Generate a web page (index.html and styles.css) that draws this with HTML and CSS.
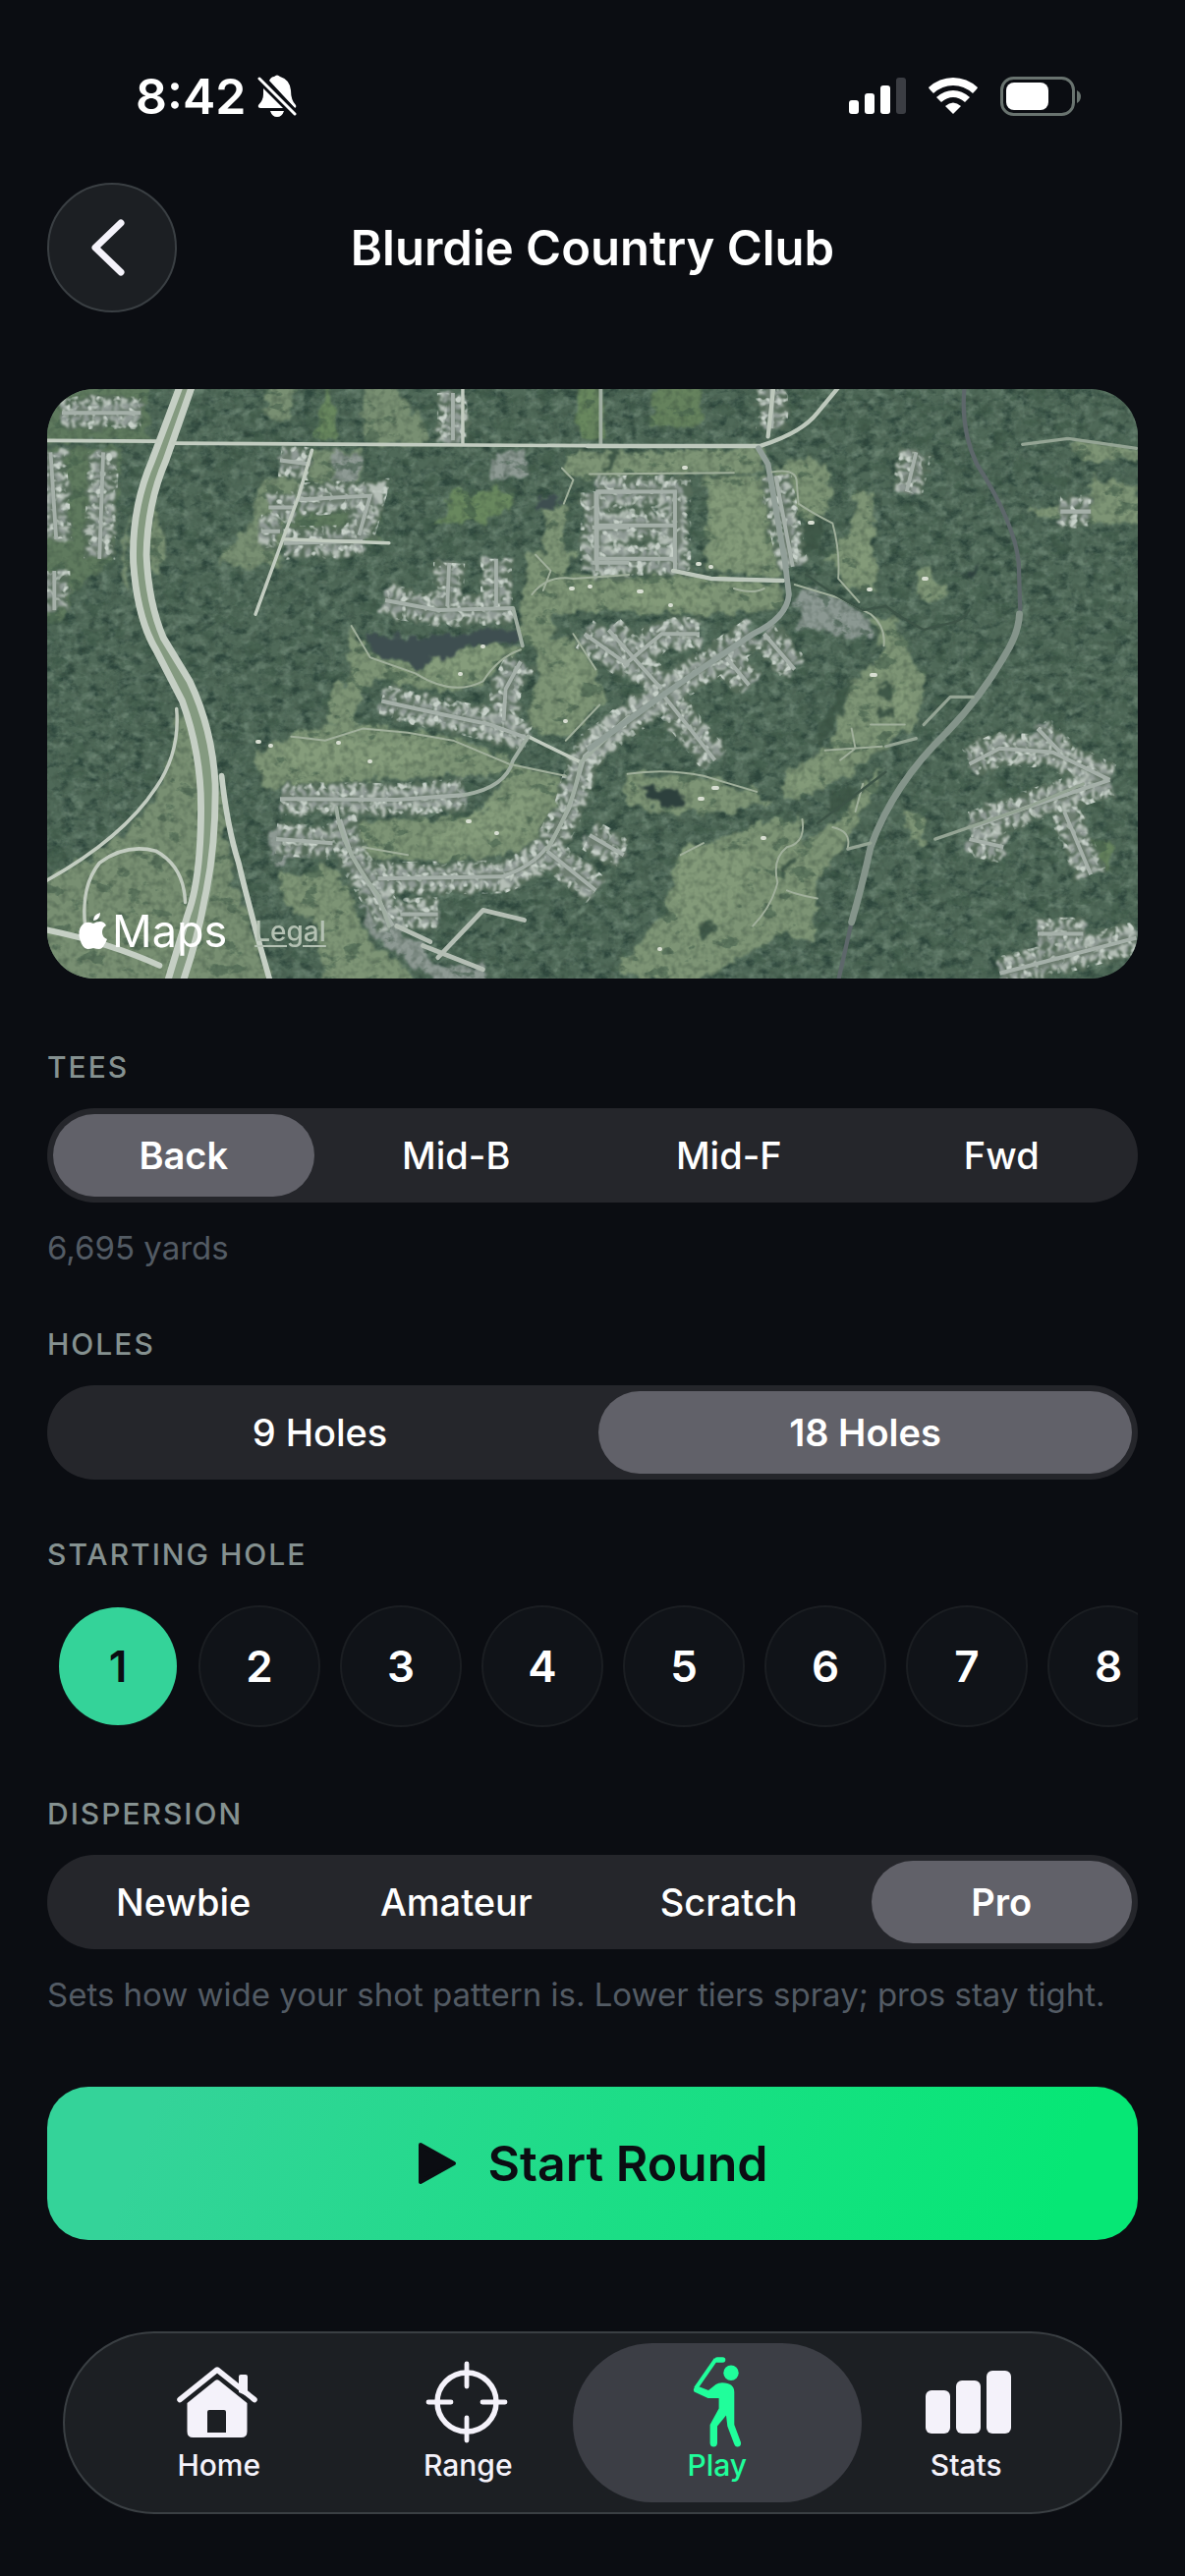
FILE: index.html
```html
<!DOCTYPE html>
<html lang="en">
<head>
  <meta charset="UTF-8">
  <title>Blurdie Country Club</title>
  <meta name="viewport" content="width=device-width, initial-scale=1.0">
  <link rel="stylesheet" href="styles.css">
</head>
<body>
  <!-- Status bar -->
  <div class="status-bar">
    <div class="status-left">
      <span class="time">8:42</span>
      <svg width="40" height="44" viewBox="0 0 40 44" aria-hidden="true">
        <path fill="#fff" d="M12 6Q14 2 17 2Q20-1 23 2Q33 5 34 16Q34 26 39 31Q40 33 38 34ZM6 14L26 34H3Q0 34 1 31Q6 26 6 20ZM13 37H27Q25 43 20 43Q15 43 13 37Z"/>
        <path stroke="#0b0d12" stroke-width="7" d="M3 3L38 39"/>
        <path stroke="#fff" stroke-width="3" stroke-linecap="round" d="M2 4L38 40"/>
      </svg>
    </div>
    <div class="status-right">
      <svg width="58" height="38" viewBox="0 0 58 38" aria-hidden="true">
        <g fill="#fff">
          <rect x="0" y="23" width="10" height="14" rx="3"/>
          <rect x="16" y="16" width="10" height="21" rx="3"/>
          <rect x="32" y="8" width="10" height="29" rx="3"/>
        </g>
        <rect x="48" y="0" width="10" height="37" rx="3" fill="#3b3d43"/>
      </svg>
      <svg width="52" height="38" viewBox="0 0 52 38" aria-hidden="true">
        <g fill="#fff">
          <path d="M1 10Q12 0 26 0Q40 0 51 10Q51 11 46 16Q37 8 26 8Q15 8 6 16Q1 11 1 10Z"/>
          <path d="M9 20Q17 13 26 13Q35 13 43 20L38 25Q32 20 26 20Q20 20 14 25Z"/>
          <path d="M18 29Q26 22 34 29L26 37Z"/>
        </g>
      </svg>
      <svg width="82" height="40" viewBox="0 0 82 40" aria-hidden="true">
        <rect x="1.5" y="1.5" width="73" height="37" rx="12" fill="none" stroke="#69736f" stroke-width="3"/>
        <rect x="6" y="6" width="43" height="28" rx="8" fill="#fff"/>
        <path d="M78 14Q82 16 82 20Q82 25 78 27Z" fill="#69736f"/>
      </svg>
    </div>
  </div>

  <header class="header">
    <button class="back-btn" type="button" aria-label="Back">
      <svg width="60" height="60" viewBox="0 0 60 60" aria-hidden="true">
        <path d="M39 5L13 30L39 55" fill="none" stroke="#f4f2fa" stroke-width="7" stroke-linecap="round" stroke-linejoin="round"/>
      </svg>
    </button>
    <h1>Blurdie Country Club</h1>
  </header>

  <main class="content">
    <!-- Course map -->
    <div class="map">
      <svg class="map-art" viewBox="0 0 1110 600" preserveAspectRatio="xMidYMid slice" role="img" aria-label="Satellite view of the course">
        <defs>
          <filter id="shade" x="0" y="0" width="100%" height="100%" color-interpolation-filters="sRGB">
            <feTurbulence type="fractalNoise" baseFrequency="0.07 0.1" numOctaves="4" seed="4"/>
            <feColorMatrix values="0 0 0 0 0.18  0 0 0 0 0.28  0 0 0 0 0.24  3.2 0 0 0 -1.5"/>
          </filter>
          <filter id="light" x="0" y="0" width="100%" height="100%" color-interpolation-filters="sRGB">
            <feTurbulence type="fractalNoise" baseFrequency="0.08 0.1" numOctaves="3" seed="19"/>
            <feColorMatrix values="0 0 0 0 0.43  0 0 0 0 0.53  0 0 0 0 0.46  0 3 0 0 -1.4"/>
          </filter>
          <!-- scattered trees over the open ground -->
          <filter id="trees" x="0" y="0" width="100%" height="100%" color-interpolation-filters="sRGB">
            <feTurbulence type="fractalNoise" baseFrequency="0.05 0.07" numOctaves="4" seed="31"/>
            <feColorMatrix values="0 0 0 0 0.25  0 0 0 0 0.36  0 0 0 0 0.29  0 0 9 0 -5.4"/>
          </filter>
          <filter id="grain" x="0" y="0" width="100%" height="100%" color-interpolation-filters="sRGB">
            <feTurbulence type="fractalNoise" baseFrequency="0.14" numOctaves="2" seed="8"/>
            <feColorMatrix values="0 0 0 0 0.2  0 0 0 0 0.28  0 0 0 0 0.23  2 0 0 0 -0.85"/>
          </filter>
          <filter id="rough" filterUnits="userSpaceOnUse" x="-20" y="-20" width="1150" height="640" color-interpolation-filters="sRGB">
            <feTurbulence type="fractalNoise" baseFrequency="0.08" numOctaves="3" seed="2" result="n"/>
            <feDisplacementMap in="SourceGraphic" in2="n" scale="18" xChannelSelector="R" yChannelSelector="G"/>
            <feGaussianBlur stdDeviation="1"/>
          </filter>
          <filter id="rooftops" filterUnits="userSpaceOnUse" x="-20" y="-20" width="1150" height="640" color-interpolation-filters="sRGB">
            <feTurbulence type="fractalNoise" baseFrequency="0.1" numOctaves="2" seed="11" result="n"/>
            <feDisplacementMap in="SourceGraphic" in2="n" scale="15" xChannelSelector="R" yChannelSelector="G"/>
            <feGaussianBlur stdDeviation="0.9"/>
          </filter>
          <filter id="speckle" filterUnits="userSpaceOnUse" x="-20" y="-20" width="1150" height="640" color-interpolation-filters="sRGB">
            <feTurbulence type="fractalNoise" baseFrequency="0.12" numOctaves="2" seed="23"/>
            <feColorMatrix values="0 0 0 0 0.78  0 0 0 0 0.82  0 0 0 0 0.79  5 0 0 0 -2.8"/>
            <feComposite in2="SourceGraphic" operator="in"/>
            <feGaussianBlur stdDeviation="0.6"/>
          </filter>
          <!-- streets lined with houses -->
          <g id="streets">
            <path transform="matrix(.3827 0 0 .4018 -8 -16)" d="M640 1078L950 1080L1130 1068M900 1280L1230 1275Q1310 1250 1350 1200M910 830Q1050 860 1200 890L1300 925M920 575L1060 600L1260 595M1235 880L1240 800L1280 730M1085 590L1090 480M1215 590L1215 470M690 320L880 310L850 410M650 430L860 425M1350 1210L1410 1100L1450 970L1568 870M800 1130L830 1220L900 1330L940 1400M630 1180L780 1190M1350 1210L1480 1310M1480 300H1568M1480 300V480M1470 390H1568M1470 480H1568M30 200L45 420M170 200L160 470M40 500V600M60 100H270M1100 50V170M960 1370L1060 1370M1450 660L1568 740M610 340H680M590 400H640M640 220L720 230"/>
            <path transform="matrix(.3865 0 0 .4018 552 -16)" d="M20 300H225V500M20 300V500M20 385H225M20 470H225M490 260L535 490M90 740L190 660L290 660M50 650L190 800M190 810L330 980M360 720L420 790M460 660L540 750M430 660L200 810L0 950M0 1170L90 1220M1000 990L1080 950L1220 960L1370 1030M1010 1150L1150 1100L1370 1030M1250 1110L1320 1270M1080 1520L1440 1430M1180 1420L1300 1420M835 300L860 200M480 40V140M1000 1180L1090 1200M1240 350H1320M1180 900L1240 960"/>
          </g>
        </defs>

        <rect width="1110" height="600" fill="#4f6958"/>
        <rect width="1110" height="600" filter="url(#shade)"/>
        <rect width="1110" height="600" filter="url(#light)" opacity=".8"/>

        <g filter="url(#rough)">
          <!-- fairways, fields and ponds -->
          <g transform="matrix(.3827 0 0 .4018 -8 -16)">
            <path fill="#788f72" d="M380 860L470 1000L520 1300L630 1560H-20V1290Q180 1230 280 1100Q370 1000 370 860ZM610 30H680L660 125L600 100ZM730 195L860 200L850 290L700 280ZM580 290L640 250L700 270L650 400L640 488L470 485L520 430L560 380ZM860 30H940L1040 150L1030 175H860ZM300 300L330 440L320 520L300 500ZM230 340L220 520L240 560Z"/>
            <path fill="#5f7a5e" d="M-20 10H290V170H-20ZM-20 190H220L190 480L80 560L60 630H-20ZM690 290H900V430H650Z"/>
            <path fill="#68875e" d="M735 165L765 10L800 165ZM1105 300L1265 292L1250 345L1190 375L1055 380ZM1440 10H1500V170H1430Z"/>
            <path fill="#7d9475" d="M820 635L870 700L1000 750L1180 690L1290 690L1180 790L1060 810L900 770L870 800L830 900L760 890L780 800L830 760ZM570 960L700 905L830 890L1100 920L1250 980L1400 1040L1430 1090L1390 1140L1280 1210L1100 1240L870 1230L800 1140L1180 1120L1240 1010L1100 1020L600 1050ZM1300 460L1430 450L1400 510L1568 510V600L1360 610L1370 680L1430 660L1480 760L1500 830L1400 930L1290 900L1330 740L1280 650ZM1340 340H1395V460H1345ZM1390 200H1568V270L1400 260ZM640 1270L780 1250L830 1330L880 1440L960 1490L1000 1560H760L740 1400L650 1340Z"/>
            <path fill="#8d9993" d="M1205 210L1290 190L1310 260L1200 270ZM780 200L860 210L840 280L780 275ZM610 1160L690 1150L770 1200L620 1250ZM860 1340L930 1370L1060 1500L1180 1500V1560H1080L880 1420Z"/>
          </g>
          <g transform="matrix(.3865 0 0 .4018 552 -16)">
            <path fill="#7d9475" d="M0 200L450 190L460 250L0 260ZM300 260H460L505 515L310 500ZM0 520L240 510L500 530L510 600L300 615L0 600ZM490 250L570 200L640 260L620 370L560 370ZM700 300L750 310V560L660 540L640 470L610 480L690 400ZM740 620H800L850 720L890 800L860 890L760 960L600 1060L510 1080L520 1010L640 940L690 780L780 700ZM780 990L720 1110L660 1210L600 1280L590 1440L510 1420L400 1480L260 1560L60 1510L200 1370L230 1230L350 1180L460 1130L560 1130V1190L640 1150ZM100 1010L350 1030L480 1080L380 1110L200 1120L90 1080ZM860 500L900 500L950 560L900 585L860 560ZM830 1120H880V1190H850ZM1330 260L1450 290V380L1200 370L1150 345L1300 335ZM1260 170L1450 190V220H1300Z"/>
            <path fill="#65825d" d="M180 10H300V130L160 140ZM0 10H40V160H0ZM1310 1180H1370V1250H1320Z"/>
            <path fill="#8b9892" d="M545 550H620L740 620V680L550 640Z"/>
            <path fill="#3f5848" d="M560 370H620L600 450L550 480ZM500 1240L550 1220L510 1290ZM760 850H800V870H750ZM770 780H790V820H765ZM640 1060L700 1040L690 1100L630 1110ZM40 250L60 190L70 240ZM270 1390L350 1370L300 1440ZM660 800L690 780L640 900L600 960L610 900Z"/>
          </g>
        </g>
        <rect width="1110" height="600" filter="url(#trees)" opacity=".55"/>
        <g filter="url(#rough)">
          <!-- mown grass -->
          <path fill="#859c7b" transform="matrix(.3827 0 0 .4018 -8 -16)" d="M640 940L860 930L1040 940L1060 970L980 1000L680 1000ZM1020 1190L1160 1110L1280 1060L1340 1050L1290 1150L1140 1200ZM1040 720L1200 680L1240 700L1140 770L1010 770ZM1380 700L1440 710L1440 830L1410 840Z"/>
          <path fill="#839a79" transform="matrix(.3865 0 0 .4018 552 -16)" d="M325 290H440L470 480L330 480ZM90 540L330 540L320 590L110 590ZM250 1200L350 1200L440 1210L370 1380L260 1420L220 1320ZM800 780H840V860L800 870ZM710 400L740 400V500L700 520ZM540 1020L640 970L600 1040L530 1060Z"/>
        </g>
        <rect width="1110" height="600" filter="url(#grain)" opacity=".45"/>
        <g filter="url(#rough)">
          <!-- water -->
          <path fill="#3e4e50" transform="matrix(.3827 0 0 .4018 -8 -16)" d="M865 655L940 668L1090 664L1280 645L1285 675L1140 690L1100 715L1040 725L1000 755L960 730L890 710ZM1325 320L1385 310V335L1325 345Z"/>
          <path fill="#2d403d" transform="matrix(.3865 0 0 .4018 552 -16)" d="M110 1040L200 1060L240 1045L250 1085L200 1105ZM990 510L1030 480L1000 530Z"/>
        </g>

        <g filter="url(#rooftops)">
          <use href="#streets" class="yards"/>
          <use href="#streets" class="houses"/>
          <use href="#streets" class="houses-far"/>
          <use href="#streets" class="lawns"/>
        </g>
        <use href="#streets" class="speckle" filter="url(#speckle)"/>
        <use href="#streets" class="asphalt"/>

        <g fill="none" stroke-linecap="round" stroke-linejoin="round">
          <g transform="matrix(.3827 0 0 .4018 -8 -16)">
            <g stroke="#849a80" stroke-width="46">
              <path d="M390 30L318 220Q265 340 268 480Q275 620 320 690L395 820Q445 960 450 1100Q450 1280 418 1370L355 1560"/>
            </g>
            <g stroke="#c5cfc4" stroke-width="18">
              <path d="M375 30L300 220Q245 340 250 480Q260 620 310 700L380 830Q430 960 430 1100Q430 1280 395 1370L335 1560"/>
              <path d="M407 30L337 220Q287 330 285 460Q290 580 330 670L400 780Q460 900 468 1040Q470 1200 440 1330Q420 1440 375 1560"/>
              <path d="M485 1020Q500 1150 530 1240Q570 1400 620 1560M10 1408Q180 1440 320 1500" stroke-width="15"/>
            </g>
            <g stroke="#c2ccc0" stroke-width="9">
              <path d="M365 850Q375 960 310 1050Q220 1180 10 1290M122 1400Q110 1300 160 1240Q230 1190 310 1210Q385 1250 388 1340M10 170L315 172M355 177L1568 184"/>
              <path d="M1126 40V180M725 195L690 310L640 440L575 610M650 420L930 430M1300 920L1440 985"/>
            </g>
            <g stroke="#a0aea2" stroke-width="10">
              <path d="M1130 1068Q1240 1050 1260 980L1300 920M790 1100Q800 1200 900 1320L930 1400M1493 40V180M1350 1205Q1420 1100 1440 985L1568 870M1260 595L1285 690"/>
            </g>
            <path stroke="#a0af9b" stroke-width="5" d="M830 640L880 720L1000 760Q1100 820 1180 780Q1220 720 1280 700M670 920L760 930L860 900L980 910L1100 930L1250 990L1400 1020M1320 460L1360 500L1340 550M1310 560Q1350 510 1420 520L1568 510M860 1200L980 1220M1420 660L1480 750M1400 930L1490 840M1390 240L1420 270L1395 330"/>
            <path stroke="#b4beb4" stroke-width="12" d="M950 1400L1040 1440M1060 1480L1180 1360L1290 1385M1020 1450L1180 1510"/>
          </g>
          <g transform="matrix(.3865 0 0 .4018 552 -16)">
            <path stroke="#bdc8bc" stroke-width="11" d="M-5 184H450Q560 150 600 100L660 30M220 500L320 520L510 525M485 30L470 160"/>
            <path stroke="#919f98" stroke-width="15" d="M445 190L470 230L515 480L525 560Q520 620 430 660L200 810L0 950"/>
            <path stroke="#5d676a" stroke-width="11" d="M988 30Q975 140 1020 230Q1120 380 1130 480L1134 600M690 1390L650 1560"/>
            <path stroke="#84948a" stroke-width="18" d="M1132 610Q1130 660 1090 720Q1030 820 940 910Q800 1040 740 1200Q720 1290 690 1390"/>
            <path stroke="#94a494" stroke-width="8" d="M680 1205L740 1190M1010 820H950L880 890M860 925L780 945M910 1180L1150 1100L1300 1040M1140 180L1260 165L1440 190"/>
            <path stroke="#a0af9b" stroke-width="5" d="M480 250Q540 240 545 270L550 330Q580 350 640 380Q660 450 655 520L710 580M540 535L660 570L740 610Q780 640 775 690M560 1130Q570 1190 520 1200Q480 1230 495 1290Q480 1350 430 1400M520 1310Q560 1325 600 1330M640 1150Q690 1160 680 1200M100 1015Q200 1000 300 1020L440 1060M690 900L700 950L660 980M740 890H830M300 1190L240 1220M0 255L380 252M380 545Q430 560 460 545M620 955L770 945M720 1040L700 1110"/>
            <path stroke="#3d5447" stroke-width="6" d="M570 510Q640 560 720 600L780 590Q820 620 880 650Q910 640 940 635Q980 630 1000 600M780 1010L600 1140"/>
          </g>
          <!-- bunkers -->
          <path stroke="#d8ded2" stroke-width="4" d="M214 359H216M227 363H228M296 360H297M328 379H329M428 440H430M457 452H458M443 262H444M420 290H421M533 203H535M552 201H553M648 80H650M662 178H664M675 181H676M602 206H605M634 220H635M836 204H838M839 291H843M728 457H730M678 406H682M664 417H667M776 136H779M892 193H895M623 570H624M527 338H528"/>
        </g>
      </svg>
      <div class="map-credit">
        <span class="map-brand">
          <svg width="30" height="38" viewBox="0 0 30 38" aria-hidden="true">
            <path fill="#fff" d="M15 11Q18 9 22 9Q26 9 28 13Q24 15 24 20Q24 25 29 27Q25 37 21 37Q18 37 15 36Q12 37 9 37Q4 37 1 26Q-1 17 4 12Q8 8 15 11ZM15 8Q15 2 22 0Q22 7 15 8Z"/>
          </svg>Maps</span>
        <a class="legal" href="#legal">Legal</a>
      </div>
    </div>

    <form class="setup">
      <fieldset class="group">
        <legend>TEES</legend>
        <div class="segmented">
          <label><input type="radio" name="tees" checked><span>Back</span></label>
          <label><input type="radio" name="tees"><span>Mid-B</span></label>
          <label><input type="radio" name="tees"><span>Mid-F</span></label>
          <label><input type="radio" name="tees"><span>Fwd</span></label>
        </div>
        <p class="note">6,695 yards</p>
      </fieldset>

      <fieldset class="group">
        <legend>HOLES</legend>
        <div class="segmented">
          <label><input type="radio" name="holes"><span>9 Holes</span></label>
          <label><input type="radio" name="holes" checked><span>18 Holes</span></label>
        </div>
      </fieldset>

      <fieldset class="group">
        <legend>STARTING HOLE</legend>
        <div class="hole-row">
          <label><input type="radio" name="start" checked><span>1</span></label>
          <label><input type="radio" name="start"><span>2</span></label>
          <label><input type="radio" name="start"><span>3</span></label>
          <label><input type="radio" name="start"><span>4</span></label>
          <label><input type="radio" name="start"><span>5</span></label>
          <label><input type="radio" name="start"><span>6</span></label>
          <label><input type="radio" name="start"><span>7</span></label>
          <label><input type="radio" name="start"><span>8</span></label>
        </div>
      </fieldset>

      <fieldset class="group">
        <legend>DISPERSION</legend>
        <div class="segmented">
          <label><input type="radio" name="dispersion"><span>Newbie</span></label>
          <label><input type="radio" name="dispersion"><span>Amateur</span></label>
          <label><input type="radio" name="dispersion"><span>Scratch</span></label>
          <label><input type="radio" name="dispersion" checked><span>Pro</span></label>
        </div>
        <p class="note">Sets how wide your shot pattern is. Lower tiers spray; pros stay tight.</p>
      </fieldset>

      <button class="start-btn" type="button">
        <svg width="40" height="44" viewBox="0 0 40 44" aria-hidden="true">
          <path d="M3 3L37 22L3 41Z" fill="#0b0d12" stroke="#0b0d12" stroke-width="4" stroke-linejoin="round"/>
        </svg>
        Start Round
      </button>
    </form>
  </main>

  <!-- Tab bar -->
  <nav class="tab-bar">
    <a class="tab" href="#home">
      <svg width="96" height="96" viewBox="0 0 96 96" aria-hidden="true">
        <path d="M68 38V22Q68 20 70 20H75Q77 20 77 22V42Z" fill="currentColor"/>
        <path d="M8 45.5L46 15L84 45.5" fill="none" stroke="currentColor" stroke-width="5.5" stroke-linecap="round" stroke-linejoin="round"/>
        <path d="M15.5 49L44 26Q46 24.5 48 26L76.5 49V78Q76.5 84 70.5 84H21.5Q15.5 84 15.5 78ZM38 56Q36 56 36 58V79H55V58Q55 56 53 56Z" fill="currentColor" fill-rule="evenodd"/>
      </svg>
      Home
    </a>
    <a class="tab" href="#range">
      <svg width="96" height="96" viewBox="0 0 96 96" aria-hidden="true">
        <g fill="none" stroke="currentColor" stroke-linecap="round">
          <circle cx="47" cy="48" r="30" stroke-width="5.5"/>
          <path stroke-width="4.8" d="M47 9V32M47 64V87M8 48H31M63 48H86"/>
        </g>
      </svg>
      Range
    </a>
    <a class="tab active" href="#play">
      <svg width="96" height="96" viewBox="0 0 96 96" aria-hidden="true">
        <g fill="currentColor">
          <circle cx="62" cy="18.3" r="7.7"/>
          <path d="M24.5 37.5Q23 35 25 33Q27 31.5 30 32.5L39 36L46.5 30Q49 28.3 53 28.3Q65.3 28.5 65.3 38V71L72 89Q72.5 93 69 93.5Q66.5 94 65.3 91L58.3 72.5L57 61.5L48 72.5V90Q47.5 93.5 44.3 93.5Q41 93.5 40.6 90V71L49.6 54.5V44L38.5 44Z"/>
          <path d="M26 34L46.5 4.5" stroke="currentColor" stroke-width="4"/>
          <path d="M48 5H53.5" stroke="currentColor" stroke-width="5.6" stroke-linecap="round"/>
        </g>
      </svg>
      Play
    </a>
    <a class="tab" href="#stats">
      <svg width="96" height="96" viewBox="0 0 96 96" aria-hidden="true">
        <g fill="currentColor">
          <rect x="7" y="36" width="25" height="44" rx="6"/>
          <rect x="38" y="26" width="25" height="54" rx="6"/>
          <rect x="69" y="16" width="25" height="64" rx="6"/>
        </g>
      </svg>
      Stats
    </a>
  </nav>
</body>
</html>
```

FILE: styles.css
```css
* { box-sizing: border-box; }

body {
  margin: 0;
  background: #0b0d12;
  color: #fff;
  font-family: Inter, "Liberation Sans", sans-serif;
}

svg {
  display: block;
  flex: none;
}

/* Status bar */
.status-bar {
  display: flex;
  justify-content: space-between;
  align-items: center;
  height: 52px;
  margin-top: 72px;
  padding: 0 106px 0 138px;
}

.status-left {
  display: flex;
  align-items: center;
  gap: 12px;
}

.status-right {
  display: flex;
  align-items: center;
  gap: 22px;
}

.time {
  font-size: 50px;
  font-weight: 600;
  line-height: 50px;
}

/* Header */
.header {
  display: grid;
  grid-template-columns: 132px 1fr 132px;
  align-items: center;
  margin-top: 62px;
  padding: 0 48px;
}

.header h1 {
  margin: 0;
  padding-top: 2px;
  font-size: 49px;
  font-weight: 600;
  line-height: 60px;
  text-align: center;
}

.back-btn {
  display: flex;
  justify-content: center;
  align-items: center;
  width: 132px;
  height: 132px;
  padding: 0;
  border: 2px solid #3a3f43;
  border-radius: 50%;
  background: #1c1f23;
}

/* Map */
.content {
  padding: 78px 48px 0;
}

.map {
  position: relative;
  height: 600px;
  border-radius: 48px;
  overflow: hidden;
}

.map-art {
  width: 100%;
  height: 100%;
}

.yards, .houses, .houses-far, .lawns, .asphalt, .speckle {
  fill: none;
}

.yards {
  stroke: #566c5a;
  stroke-width: 80px;
}

.houses {
  stroke: #b4beb6;
  stroke-width: 70px;
  stroke-dasharray: 13px 14px;
}

.houses-far {
  stroke: #8f9a95;
  stroke-width: 44px;
  stroke-dasharray: 17px 11px;
}

.lawns {
  stroke: #6d7d70;
  stroke-width: 18px;
}

.speckle {
  stroke: #fff;
  stroke-width: 84px;
}

.asphalt {
  stroke: #a5b0a9;
  stroke-width: 10px;
}

.map-credit {
  position: absolute;
  left: 32px;
  bottom: 20px;
  display: flex;
  align-items: center;
  gap: 28px;
}

.map-brand {
  display: flex;
  align-items: center;
  gap: 4px;
  font-size: 45px;
  line-height: 56px;
}

.legal {
  color: #b4c1b3;
  font-size: 28px;
  font-weight: 500;
  text-underline-offset: 4px;
}

/* Round setup */
.setup {
  padding-top: 70px;
}

.group {
  min-width: 0;
  margin: 0 0 56px;
  padding: 0;
  border: 0;
}

.group legend {
  margin-bottom: 22px;
  padding: 0;
  color: #859190;
  font-size: 30px;
  font-weight: 500;
  line-height: 40px;
  letter-spacing: 2px;
}

.segmented {
  display: flex;
  height: 96px;
  border-radius: 48px;
  background: #25262b;
}

.segmented label {
  flex: 1;
  padding: 6px;
}

.segmented input, .hole-row input {
  position: absolute;
  opacity: 0;
}

.segmented span {
  display: block;
  border-radius: 42px;
  font-size: 38px;
  font-weight: 500;
  line-height: 84px;
  text-align: center;
}

.segmented input:checked + span {
  background: #616169;
  font-weight: 600;
}

.note {
  margin: 24px 0 0;
  color: #535b64;
  font-size: 33px;
  line-height: 44px;
}

.hole-row {
  display: flex;
  gap: 24px;
  padding: 12px 0 14px 12px;
  overflow: hidden;
}

.hole-row span {
  display: block;
  width: 120px;
  height: 120px;
  border-radius: 50%;
  background: #101318;
  box-shadow: 0 0 0 2px #1b1e22;
  font-size: 44px;
  font-weight: 600;
  line-height: 120px;
  text-align: center;
}

.hole-row input:checked + span {
  background: #34d399;
  box-shadow: none;
  color: #0b0d12;
}

.start-btn {
  display: flex;
  justify-content: center;
  align-items: center;
  gap: 32px;
  width: 100%;
  height: 156px;
  margin-top: 72px;
  border: 0;
  border-radius: 42px;
  background: linear-gradient(110deg, #34d399 10%, #06e775 92%);
  color: #0b0d12;
  font-family: inherit;
  font-size: 50px;
  font-weight: 600;
}

/* Tab bar */
.tab-bar {
  display: grid;
  grid-template-columns: repeat(4, 1fr);
  height: 186px;
  margin: 93px 64px 63px;
  padding: 10px 30px;
  border: 2px solid #3a3f43;
  border-radius: 93px;
  background: #1c1f23;
}

.tab {
  display: flex;
  flex-direction: column;
  align-items: center;
  padding-top: 12px;
  border-radius: 81px;
  color: #f4f2fa;
  font-size: 30px;
  font-weight: 500;
  line-height: 32px;
  text-decoration: none;
}

.tab.active {
  margin: 0 -20px;
  background: #3c3e45;
  color: #20fe9b;
}
```
